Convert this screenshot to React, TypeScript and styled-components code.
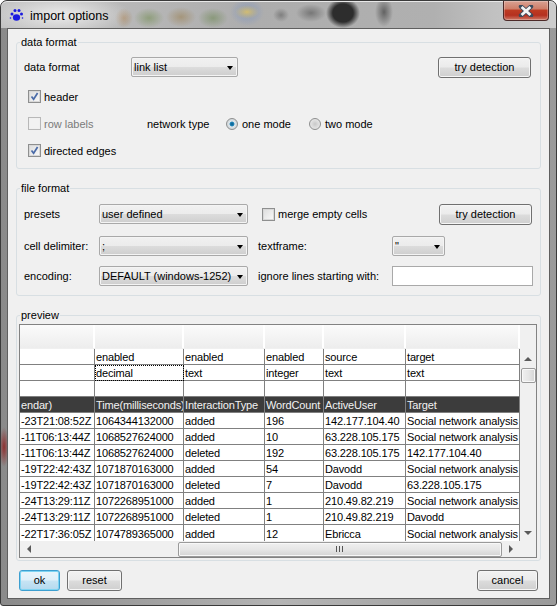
import React from "react"
import styled, { createGlobalStyle } from "styled-components"

const GlobalStyle = createGlobalStyle`
  html, body {
    margin: 0;
    padding: 0;
    background: #fff;
  }
  body {
    font-family: "Liberation Sans", Arial, sans-serif;
    font-size: 11px;
    color: #000;
  }
`

const Window = styled.div`
  box-sizing: border-box;
  width: 557px;
  height: 606px;
  display: flex;
  flex-direction: column;
  padding: 0 6px 6px;
  border: 1px solid #3a3a3a;
  border-radius: 7px 7px 3px 3px;
  background:
    radial-gradient(ellipse 5px 20px at 3px 446px, #8e3030, transparent),
    linear-gradient(90deg, #8a8a8a 0, #b4b4b4 50%, #b4b4b4 50%, #9a9a9a 100%);
`

const TitleBar = styled.div`
  height: 27px;
  flex: none;
  margin: 0 -6px;
  padding: 0 7px 0 8px;
  display: flex;
  align-items: flex-start;
  border-radius: 6px 6px 0 0;
  box-shadow: inset 0 1px 0 #e8e8e8;
  background:
    radial-gradient(ellipse 70px 22px at 60px 14px, rgba(238, 238, 238, 0.95), transparent),
    radial-gradient(ellipse 9px 10px at 123px 17px, rgba(170, 140, 105, 0.75), transparent),
    radial-gradient(ellipse 15px 10px at 148px 17px, rgba(130, 150, 105, 0.75), transparent),
    radial-gradient(ellipse 15px 10px at 180px 16px, rgba(160, 140, 105, 0.75), transparent),
    radial-gradient(ellipse 15px 10px at 212px 17px, rgba(125, 145, 105, 0.75), transparent),
    radial-gradient(ellipse 12px 7px at 246px 11px, rgba(214, 190, 110, 0.95), transparent),
    radial-gradient(ellipse 17px 14px at 246px 11px, rgba(130, 150, 190, 0.8), transparent),
    radial-gradient(ellipse 8px 7px at 280px 14px, rgba(115, 115, 115, 0.8), transparent),
    radial-gradient(ellipse 15px 9px at 310px 12px, rgba(105, 105, 105, 0.8), transparent),
    radial-gradient(ellipse 17px 15px at 342px 12px, rgba(45, 45, 45, 1) 60%, transparent),
    radial-gradient(ellipse 9px 15px at 383px 11px, rgba(85, 85, 85, 0.85), transparent),
    linear-gradient(90deg, #c2c2c2 0, #adadad 45%, #b0b0b0 78%, #c0c0c0 88%, #cdcdcd 100%);
`

const TitleText = styled.span`
  margin: 7px 0 0 6px;
  font-size: 12.5px;
  line-height: 16px;
`

const PawIcon = styled.svg`
  width: 15px;
  height: 16px;
  margin-top: 6px;
  flex: none;
`

const CloseButton = styled.button`
  width: 46px;
  height: 20px;
  margin-left: auto;
  padding: 0;
  display: flex;
  align-items: center;
  justify-content: center;
  border: 1px solid #4d2a28;
  border-top: 0;
  border-radius: 0 0 4px 4px;
  background: linear-gradient(#d9a193 0, #cf7f6a 40%, #bd3a22 50%, #b5301f 75%, #cf7a68 100%);
  box-shadow: inset 0 0 0 1px rgba(255, 255, 255, 0.25);
`

const Client = styled.div`
  flex: 1;
  display: flex;
  flex-direction: column;
  padding: 6px 8px 0;
  border: 1px solid #5f5f5f;
  background: #f0f0f0;
`

const Group = styled.fieldset<{ $top: number; $bottom: number; $side?: number }>`
  min-width: 0;
  margin: 0 0 12px;
  padding: ${(p) => p.$top}px ${(p) => p.$side ?? 7}px ${(p) => p.$bottom}px;
  border: 1px solid #d8dfe3;
  border-radius: 3px;
`

const Legend = styled.legend<{ $left: number }>`
  margin-left: ${(p) => p.$left}px;
  padding: 0 1px;
  line-height: 14px;
`

const TopRow = styled.div`
  display: flex;
  padding-right: 2px;
  margin-bottom: 5px;
  align-items: flex-start;
`

const CheckRow = styled.div`
  height: 27px;
  padding-left: 4px;
  display: flex;
  align-items: center;
`

const Slot = styled.div<{ $width: number }>`
  width: ${(p) => p.$width}px;
  flex: none;
  display: flex;
  align-items: center;
  white-space: nowrap;
`

const TopLabel = styled(Slot)`
  height: 20px;
`

const MergeSlot = styled(Slot)`
  box-sizing: border-box;
  height: 20px;
  padding-left: 14px;
`

const FormGrid = styled.div`
  display: grid;
  grid-template-columns: 75px 149px 144px 141px;
  grid-template-rows: 32px 30px 20px;
  align-items: start;
`

const GridLabel = styled.span<{ $offset?: number }>`
  line-height: 20px;
  white-space: nowrap;
  margin-left: ${(p) => p.$offset ?? 0}px;
`

const Select = styled.div<{ $width?: number }>`
  box-sizing: border-box;
  height: 20px;
  width: ${(p) => (p.$width ? `${p.$width}px` : "auto")};
  padding: 0 16px 0 2px;
  position: relative;
  line-height: 18px;
  white-space: nowrap;
  border: 1px solid #a9a9a9;
  border-radius: 2px;
  box-shadow: inset 0 0 0 1px #f4f4f4;
  background: linear-gradient(#f1f1f1 0, #ececec 48%, #dcdcdc 52%, #cecece 100%);
  &::after {
    content: "";
    position: absolute;
    right: 4px;
    top: 8px;
    border: 3.5px solid transparent;
    border-top: 4px solid #000;
    border-bottom: 0;
  }
`

const PushButton = styled.button<{ $width: number; $default?: boolean; $right?: boolean; $inset?: number }>`
  box-sizing: border-box;
  width: ${(p) => p.$width}px;
  height: 21px;
  padding: 0 0 1px;
  font: inherit;
  color: #000;
  margin-left: ${(p) => (p.$right ? "auto" : "0")};
  margin-right: ${(p) => p.$inset ?? 0}px;
  border: 1px solid ${(p) => (p.$default ? "#3d9fd0" : "#707070")};
  border-radius: 3px;
  box-shadow: inset 0 0 0 1px ${(p) => (p.$default ? "#7ed4f2" : "#f6f6f6")};
  background: ${(p) =>
    p.$default
      ? "linear-gradient(#e9f5fb 0, #dff0f9 48%, #c6e4f4 52%, #b4d9ee 100%)"
      : "linear-gradient(#f2f2f2 0, #ebebeb 48%, #dcdcdc 52%, #cfcfcf 100%)"};
`

const Box = styled.span<{ $disabled?: boolean }>`
  box-sizing: border-box;
  width: 13px;
  height: 13px;
  margin-right: 3px;
  flex: none;
  display: inline-flex;
  align-items: center;
  justify-content: center;
  border: 1px solid ${(p) => (p.$disabled ? "#b8b8b8" : "#8e8f8f")};
  box-shadow: inset 0 0 0 1px ${(p) => (p.$disabled ? "#f0f0f0" : "#d8d8d8")};
  background: ${(p) => (p.$disabled ? "#f2f2f2" : "linear-gradient(135deg, #dcdcdc, #fafafa)")};
`

const CheckLabel = styled.span<{ $disabled?: boolean }>`
  color: ${(p) => (p.$disabled ? "#7a7a7a" : "#000")};
`

const Radio = styled.span<{ $on?: boolean }>`
  box-sizing: border-box;
  width: 12px;
  height: 12px;
  margin-right: 4px;
  flex: none;
  border-radius: 50%;
  border: 1px solid #8e8f8f;
  background: ${(p) =>
    p.$on
      ? "radial-gradient(circle at 50% 50%, #0d5c8a 0, #1c84b8 28%, #dfe6ea 40%, #c4c8cb 100%)"
      : "radial-gradient(circle at 50% 50%, #c8c8c8 0, #dcdcdc 45%, #f0f0f0 100%)"};
`

const TextBox = styled.div`
  box-sizing: border-box;
  height: 20px;
  border: 1px solid #a9a9a9;
  background: #fff;
`

const Frame = styled.div`
  width: 518px;
  border: 1px solid #828282;
  background: #f0f0f0;
  box-sizing: border-box;
`

const HeaderStrip = styled.div`
  height: 24px;
  display: flex;
`

const HeaderCell = styled.div<{ $width: number }>`
  box-sizing: border-box;
  width: ${(p) => p.$width}px;
  height: 23px;
  border-right: 2px solid #fff;
  background: linear-gradient(#fbfbfb, #ededed);
`

const BodyRow = styled.div`
  display: flex;
  height: 192px;
`

const Sheet = styled.table`
  width: 500px;
  height: 192px;
  table-layout: fixed;
  border-collapse: separate;
  border-spacing: 0;
  letter-spacing: -0.15px;
  background: #fff;
`

const Row = styled.tr<{ $dark?: boolean }>`
  height: 16px;
  background: ${(p) => (p.$dark ? "#3c3c3c" : "#fff")};
  color: ${(p) => (p.$dark ? "#f2f2f2" : "#000")};
`

const Cell = styled.td<{ $focus?: boolean; $last?: boolean }>`
  box-sizing: border-box;
  height: 16px;
  padding: 1px 0 0 1px;
  overflow: hidden;
  white-space: nowrap;
  line-height: 14px;
  border-right: 1px solid #808080;
  border-bottom: ${(p) => (p.$last ? "0" : "1px solid #808080")};
  outline: ${(p) => (p.$focus ? "1px dotted #000" : "none")};
  outline-offset: -1px;
`

const VScroll = styled.div`
  width: 16px;
  display: flex;
  flex-direction: column;
  align-items: center;
`

const HScroll = styled.div`
  height: 16px;
  display: flex;
  align-items: center;
`

const ArrowBox = styled.div<{ $width?: number; $height?: number }>`
  width: ${(p) => p.$width ?? 17}px;
  height: ${(p) => p.$height ?? 16}px;
  flex: none;
  display: flex;
  align-items: center;
  justify-content: center;
`

const Arrow = styled.span<{ $dir: "up" | "down" | "left" | "right" }>`
  width: 0;
  height: 0;
  border: 4px solid transparent;
  ${(p) =>
    p.$dir === "up"
      ? "border-top: 0; border-bottom: 4px solid #5a5a5a;"
      : p.$dir === "down"
        ? "border-bottom: 0; border-top: 4px solid #5a5a5a;"
        : p.$dir === "left"
          ? "border-left: 0; border-right: 4px solid #5a5a5a;"
          : "border-right: 0; border-left: 4px solid #5a5a5a;"}
`

const VThumb = styled.div`
  box-sizing: border-box;
  width: 15px;
  height: 15px;
  border: 1px solid #9a9a9a;
  border-radius: 2px;
  box-shadow: inset 0 0 0 1px #f8f8f8;
  background: linear-gradient(90deg, #f0f0f0, #e6e6e6 50%, #d4d4d4);
`

const HThumb = styled.div`
  box-sizing: border-box;
  width: 324px;
  height: 15px;
  display: flex;
  align-items: center;
  justify-content: center;
  gap: 1px;
  border: 1px solid #9a9a9a;
  border-radius: 2px;
  box-shadow: inset 0 0 0 1px #f8f8f8;
  background: linear-gradient(#f0f0f0, #e6e6e6 50%, #d4d4d4);
`

const Grip = styled.span`
  width: 1px;
  height: 6px;
  margin-right: 1px;
  background: #555;
`

const Track = styled.div`
  flex: 1;
`

const Footer = styled.div`
  display: flex;
  gap: 7px;
  padding: 0 3px;
  margin-top: -3px;
`

const headerWidths = [75, 89, 81, 59, 82, 114]

const topRows = [
  ["", "enabled", "enabled", "enabled", "source", "target"],
  ["", "decimal", "text", "integer", "text", "text"],
  ["", "", "", "", "", ""],
]

const titles = ["endar)", "Time(milliseconds)", "InteractionType", "WordCount", "ActiveUser", "Target"]

const rows = [
  ["-23T21:08:52Z", "1064344132000", "added", "196", "142.177.104.40", "Social network analysis"],
  ["-11T06:13:44Z", "1068527624000", "added", "10", "63.228.105.175", "Social network analysis"],
  ["-11T06:13:44Z", "1068527624000", "deleted", "192", "63.228.105.175", "142.177.104.40"],
  ["-19T22:42:43Z", "1071870163000", "added", "54", "Davodd", "Social network analysis"],
  ["-19T22:42:43Z", "1071870163000", "deleted", "7", "Davodd", "63.228.105.175"],
  ["-24T13:29:11Z", "1072268951000", "added", "1", "210.49.82.219", "Social network analysis"],
  ["-24T13:29:11Z", "1072268951000", "deleted", "1", "210.49.82.219", "Davodd"],
  ["-22T17:36:05Z", "1074789365000", "added", "12", "Ebricca", "Social network analysis"],
]

const Check: React.FC = () => (
  <svg width="9" height="9" viewBox="0 0 9 9">
    <path d="M1.5 4.5 L3.6 7.2 L7.6 1" fill="none" stroke="#4a6ba8" strokeWidth="1.7" />
  </svg>
)

const CheckItem: React.FC<{ label: string; checked?: boolean; disabled?: boolean }> = ({
  label,
  checked,
  disabled,
}) => (
  <>
    <Box $disabled={disabled}>{checked && <Check />}</Box>
    <CheckLabel $disabled={disabled}>{label}</CheckLabel>
  </>
)

export default function App() {
  return (
    <>
      <GlobalStyle />
      <Window>
        <TitleBar>
          <PawIcon viewBox="0 0 15 16">
            <g fill="#1a1ae0">
              <ellipse cx="7.5" cy="10.5" rx="3.6" ry="3.2" />
              <circle cx="3" cy="7" r="1.5" />
              <circle cx="6" cy="3.5" r="1.5" />
              <circle cx="10" cy="3.5" r="1.5" />
              <circle cx="12.5" cy="7" r="1.5" />
              <circle cx="1.5" cy="11" r="0.8" />
              <circle cx="13.5" cy="11" r="0.8" />
            </g>
          </PawIcon>
          <TitleText>import options</TitleText>
          <CloseButton aria-label="close">
            <svg width="16" height="12" viewBox="0 0 16 12">
              <path
                d="M3 1.5 L13 10.5 M13 1.5 L3 10.5"
                stroke="#3c4a5c"
                strokeWidth="4.4"
                strokeLinecap="round"
              />
              <path d="M3.6 2 L12.4 10 M12.4 2 L3.6 10" stroke="#f4f4f4" strokeWidth="2.8" />
            </svg>
          </CloseButton>
        </TitleBar>
        <Client>
          <Group $top={8} $bottom={4} $side={7}>
            <Legend $left={-4}>data format</Legend>
            <TopRow>
              <TopLabel $width={107}>data format</TopLabel>
              <Select $width={107}>link list</Select>
              <PushButton $width={93} $right>
                try detection
              </PushButton>
            </TopRow>
            <CheckRow>
              <CheckItem label="header" checked />
            </CheckRow>
            <CheckRow>
              <Slot $width={119}>
                <CheckItem label="row labels" disabled />
              </Slot>
              <Slot $width={79}>network type</Slot>
              <Slot $width={83}>
                <Radio $on />
                one mode
              </Slot>
              <Slot $width={70}>
                <Radio />
                two mode
              </Slot>
            </CheckRow>
            <CheckRow>
              <CheckItem label="directed edges" checked />
            </CheckRow>
          </Group>
          <Group $top={9} $bottom={9}>
            <Legend $left={-4}>file format</Legend>
            <FormGrid>
              <GridLabel>presets</GridLabel>
              <Select>user defined</Select>
              <MergeSlot $width={144}>
                <CheckItem label="merge empty cells" />
              </MergeSlot>
              <PushButton $width={93} $right $inset={1}>
                try detection
              </PushButton>
              <GridLabel>cell delimiter:</GridLabel>
              <Select>;</Select>
              <GridLabel $offset={10}>textframe:</GridLabel>
              <Select $width={53}>"</Select>
              <GridLabel>encoding:</GridLabel>
              <Select>DEFAULT (windows-1252)</Select>
              <GridLabel $offset={10}>ignore lines starting with:</GridLabel>
              <TextBox />
            </FormGrid>
          </Group>
          <Group $top={2} $bottom={2} $side={2}>
            <Legend $left={1}>preview</Legend>
            <Frame>
              <HeaderStrip>
                {headerWidths.map((w, i) => (
                  <HeaderCell key={i} $width={w} />
                ))}
              </HeaderStrip>
              <BodyRow>
                <Sheet>
                  <colgroup>
                    {headerWidths.map((w, i) => (
                      <col key={i} style={{ width: w }} />
                    ))}
                  </colgroup>
                  <tbody>
                    {topRows.map((r, i) => (
                      <Row key={i}>
                        {r.map((c, j) => (
                          <Cell key={j} $focus={i === 1 && j === 1}>
                            {c}
                          </Cell>
                        ))}
                      </Row>
                    ))}
                    <Row $dark>
                      {titles.map((c) => (
                        <Cell key={c}>{c}</Cell>
                      ))}
                    </Row>
                    {rows.map((r, i) => (
                      <Row key={i}>
                        {r.map((c, j) => (
                          <Cell key={j} $last={i === rows.length - 1}>
                            {c}
                          </Cell>
                        ))}
                      </Row>
                    ))}
                  </tbody>
                </Sheet>
                <VScroll>
                  <ArrowBox $width={16} $height={19}>
                    <Arrow $dir="up" />
                  </ArrowBox>
                  <VThumb />
                  <Track />
                  <ArrowBox $width={16}>
                    <Arrow $dir="down" />
                  </ArrowBox>
                </VScroll>
              </BodyRow>
              <HScroll>
                <ArrowBox>
                  <Arrow $dir="left" />
                </ArrowBox>
                <Track />
                <HThumb>
                  <Grip />
                  <Grip />
                  <Grip />
                </HThumb>
                <ArrowBox $width={18}>
                  <Arrow $dir="right" />
                </ArrowBox>
                <ArrowBox $width={16} />
              </HScroll>
            </Frame>
          </Group>
          <Footer>
            <PushButton $width={41} $default>
              ok
            </PushButton>
            <PushButton $width={55}>reset</PushButton>
            <PushButton $width={61} $right>
              cancel
            </PushButton>
          </Footer>
        </Client>
      </Window>
    </>
  )
}
